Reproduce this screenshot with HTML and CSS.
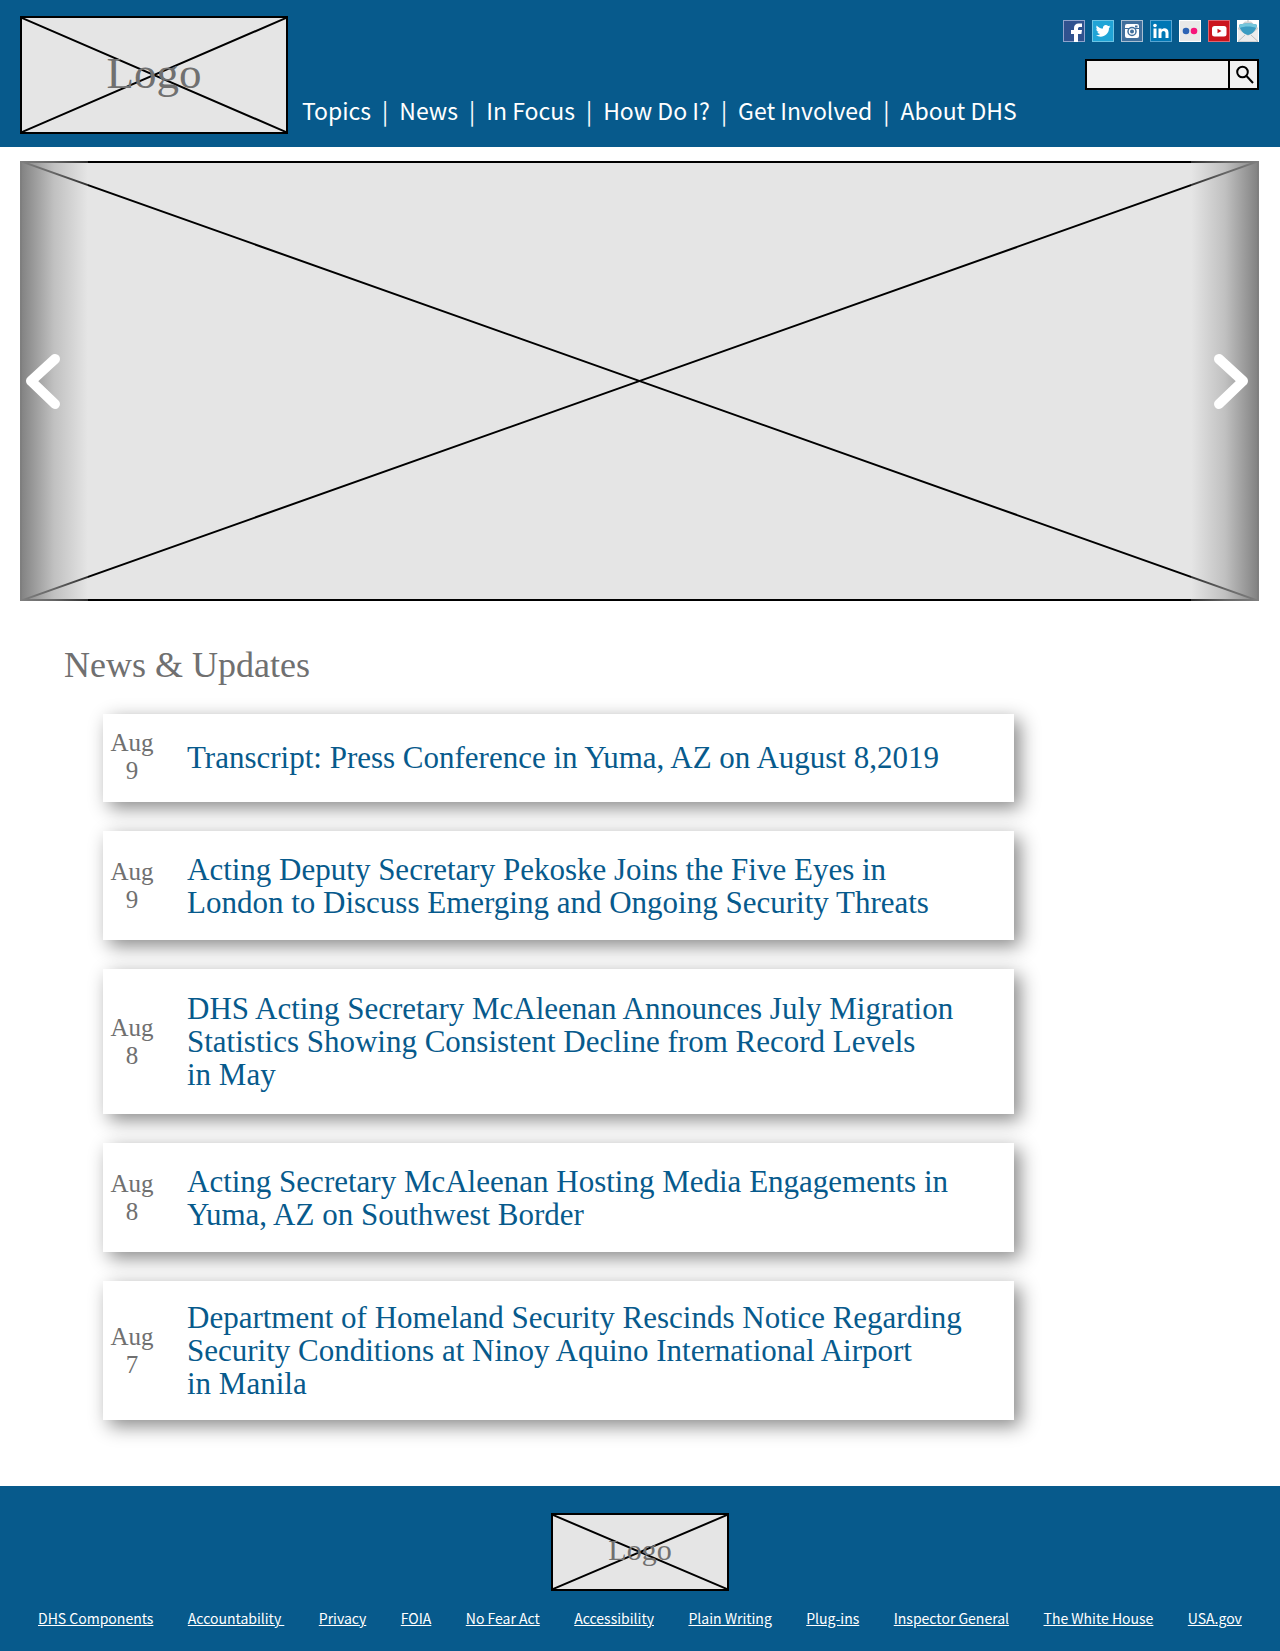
FILE: index.html
```html
<!DOCTYPE html>
<html lang="en">
<head>
<meta charset="utf-8">
<meta name="viewport" content="width=device-width, initial-scale=1">
<title>Homeland Security</title>
<link rel="stylesheet" href="styles.css">
</head>
<body>
<header class="site-header">
  <a class="logo logo--large" href="#" aria-label="Home">
    <svg class="cross" viewBox="0 0 100 100" preserveAspectRatio="none" aria-hidden="true"><path d="M0 0L100 100M100 0L0 100"/></svg>
    <span class="logo-text">Logo</span>
  </a>
  <nav class="main-nav" aria-label="Main">
    <a href="#">Topics</a><span class="bar">|</span>
    <a href="#">News</a><span class="bar">|</span>
    <a href="#">In Focus</a><span class="bar">|</span>
    <a href="#">How Do I?</a><span class="bar">|</span>
    <a href="#">Get Involved</a><span class="bar">|</span>
    <a href="#">About DHS</a>
  </nav>
  <div class="tools">
    <div class="social">
      <a href="#" aria-label="Facebook"><svg viewBox="0 0 22 22"><rect width="22" height="22" fill="#8fa3cc"/><rect x="1" y="1" width="20" height="20" fill="#30528f"/><path fill="#fff" d="M11 22v-8H8v-4h3V8c0-3 2-4.500 4.500-4.500H19V7h-2c-1.300 0-2 .5-2 1.500V10h4l-.6 4H15v8z"/></svg></a>
      <a href="#" aria-label="Twitter"><svg viewBox="0 0 22 22"><rect width="22" height="22" fill="#6cc4e4"/><rect x="1" y="1" width="20" height="20" fill="#20a4d6"/><path fill="#fff" d="M18.500 6.500c-.6.300-1.100.4-1.700.5.700-.4 1-.9 1.300-1.600-.6.300-1.200.6-2 .7-2.100-2.200-5.600-.6-5.100 2.500C8.500 8.500 6.300 7.300 4.700 5.400c-.8 1.500-.4 3.100.9 4-.5 0-.9-.1-1.300-.3 0 1.400 1 2.600 2.400 3-.4.100-.9.100-1.300 0 .4 1.200 1.500 2 2.800 2-1.200 1-2.800 1.400-4.300 1.200 5.700 3.400 13.100.1 13.100-7.300.6-.4 1.100-.9 1.500-1.500z"/></svg></a>
      <a href="#" aria-label="Instagram"><svg viewBox="0 0 22 22"><rect width="22" height="22" fill="#aabfd2"/><rect x="1" y="1" width="20" height="20" fill="#416f9c"/><rect x="4" y="4" width="14" height="14" rx="2" fill="#fff"/><path stroke="#416f9c" d="M4 8.500h4M14 8.500h4"/><circle cx="11" cy="11.500" r="4" fill="#fff" stroke="#416f9c" stroke-width="1.500"/><circle cx="11" cy="11.500" r="2" fill="#416f9c"/><rect x="14" y="5.500" width="2.500" height="2" fill="#416f9c"/></svg></a>
      <a href="#" aria-label="LinkedIn"><svg viewBox="0 0 22 22"><rect width="22" height="22" fill="#58a5d2"/><rect x="1" y="1" width="20" height="20" fill="#0077b5"/><path fill="#fff" d="M3.500 8.500h3V18h-3zM8.500 8.500h3v1.300c1.800-2.500 7-2 7 2.700V18h-3v-4.800c0-3-4-3-4 0V18h-3z"/><circle cx="5" cy="5.500" r="1.800" fill="#fff"/></svg></a>
      <a href="#" aria-label="Flickr"><svg viewBox="0 0 22 22"><rect width="22" height="22" fill="#fff"/><rect x="1" y="1" width="20" height="20" fill="#e9e9e9"/><circle cx="7" cy="11" r="3.300" fill="#2d63b4"/><circle cx="15" cy="11" r="3.300" fill="#f6157a"/></svg></a>
      <a href="#" aria-label="YouTube"><svg viewBox="0 0 22 22"><rect width="22" height="22" fill="#dc6570"/><rect x="1" y="1" width="20" height="20" fill="#cb141c"/><rect x="4" y="6" width="14.500" height="10.500" rx="2.500" fill="#fff"/><path fill="#cb141c" d="M9.500 8.700v4.600l4-2.300z"/></svg></a>
      <a href="#" aria-label="Email updates"><svg viewBox="0 0 22 22"><rect width="22" height="22" fill="#fff"/><path fill="#d2d2d2" d="M1 8L8 1.500h6L21 8v14H1z"/><path fill="#ececec" d="M1 9l10 7 10-7v12H1z"/><path fill="#3b9cc2" d="M2 5c3-2 15-2 18 0-1 5-4 9-9 10C6 14 3 10 2 5z"/><path fill="#74c6dc" d="M2 5c3-2 15-2 18 0l-1 3c-4-2-12-2-16 0z"/><path fill="none" stroke="#bdbdbd" d="M1 21.500L8 15M21 21.500L14 15M11 0v2"/></svg></a>
    </div>
    <form class="search" role="search">
      <input class="search-box" type="search" aria-label="Search">
      <button class="search-button" type="button" aria-label="Search">
        <svg viewBox="0 0 20 20"><circle cx="7.500" cy="7" r="5.300"/><path d="M11.500 11L18 18"/></svg>
      </button>
    </form>
  </div>
</header>

<main>
  <section class="carousel" aria-label="Featured">
    <svg class="cross" viewBox="0 0 100 100" preserveAspectRatio="none" aria-hidden="true"><path d="M0 0L100 100M100 0L0 100"/></svg>
    <button class="slide slide--previous" type="button" aria-label="Previous"><svg viewBox="0 0 34 55"><path d="M29 5L5 27L29 50"/></svg></button>
    <button class="slide slide--next" type="button" aria-label="Next"><svg viewBox="0 0 34 55"><path d="M5 5L29 27L5 50"/></svg></button>
  </section>

  <section class="news">
    <h1 class="news-heading">News &amp; Updates</h1>
    <div class="news-list">
      <article class="card card--short">
        <time class="date" datetime="2019-08-09">Aug<br>9</time>
        <a class="title" href="#">Transcript: Press Conference in Yuma, AZ on August 8,2019</a>
      </article>
      <article class="card">
        <time class="date" datetime="2019-08-09">Aug<br>9</time>
        <a class="title" href="#">Acting Deputy Secretary Pekoske Joins the Five Eyes in<br>London to Discuss Emerging and Ongoing Security Threats</a>
      </article>
      <article class="card card--tall">
        <time class="date" datetime="2019-08-08">Aug<br>8</time>
        <a class="title" href="#">DHS Acting Secretary McAleenan Announces July Migration<br>Statistics Showing Consistent Decline from Record Levels<br>in May</a>
      </article>
      <article class="card">
        <time class="date" datetime="2019-08-08">Aug<br>8</time>
        <a class="title" href="#">Acting Secretary McAleenan Hosting Media Engagements in<br>Yuma, AZ on Southwest Border</a>
      </article>
      <article class="card">
        <time class="date" datetime="2019-08-07">Aug<br>7</time>
        <a class="title" href="#">Department of Homeland Security Rescinds Notice Regarding<br>Security Conditions at Ninoy Aquino International Airport<br>in Manila</a>
      </article>
    </div>
  </section>
</main>

<footer class="site-footer">
  <a class="logo logo--small" href="#" aria-label="Home">
    <svg class="cross" viewBox="0 0 100 100" preserveAspectRatio="none" aria-hidden="true"><path d="M0 0L100 100M100 0L0 100"/></svg>
    <span class="logo-text">Logo</span>
  </a>
  <nav class="footer-nav" aria-label="Footer">
    <a href="#">DHS Components</a>
    <a href="#">Accountability&nbsp;</a>
    <a href="#">Privacy</a>
    <a href="#">FOIA</a>
    <a href="#">No Fear Act</a>
    <a href="#">Accessibility</a>
    <a href="#">Plain Writing</a>
    <a href="#">Plug-ins</a>
    <a href="#">Inspector General</a>
    <a href="#">The White House</a>
    <a href="#">USA.gov</a>
  </nav>
</footer>
</body>
</html>
```

FILE: styles.css
```css
:root {
  --blue: #075a8c;
  --panel: #e5e5e5;
  --gray: #707070;
  --serif: "Liberation Serif", serif;
  --sans: "Noto Sans CJK SC", sans-serif;
}

* { box-sizing: border-box; }

body {
  margin: 0;
  background: #fff;
  color: var(--gray);
  font-family: var(--serif);
}

a { color: inherit; text-decoration: none; }
svg { display: block; }
button { padding: 0; border: 0; cursor: pointer; }

/* Crossed placeholder boxes */
.cross {
  position: absolute;
  inset: 0;
  width: 100%;
  height: 100%;
}
.cross path {
  stroke: #000;
  stroke-width: 2px;
  vector-effect: non-scaling-stroke;
}
.logo {
  position: relative;
  display: grid;
  place-items: center;
  padding-bottom: 4px;
  border: 2px solid #000;
  background: var(--panel);
}
.logo-text { position: relative; }
.logo--large { width: 268px; height: 118px; font-size: 45px; line-height: 48px; }
.logo--small { width: 178px; height: 78px; font-size: 30px; line-height: 32px; }

/* Header */
.site-header {
  display: flex;
  gap: 14px;
  padding: 16px 21px 13px 20px;
  background: var(--blue);
}
.main-nav {
  display: flex;
  align-self: flex-end;
  gap: 11px;
  padding-bottom: 6px;
  color: #fff;
  font: 23px/36px var(--sans);
  white-space: nowrap;
}
.tools {
  display: flex;
  flex-direction: column;
  align-items: flex-end;
  gap: 17px;
  margin-left: auto;
  padding-top: 4px;
}
.social { display: flex; gap: 7px; }
.social svg { width: 22px; height: 22px; }
.search {
  display: flex;
  width: 174px;
  height: 31px;
  border: 2px solid #000;
}
.search-box {
  flex: 1;
  min-width: 0;
  padding: 0 6px;
  border: 0;
  border-radius: 0;
  background: #f2f2f2;
  font: 16px var(--sans);
}
.search-button {
  display: grid;
  place-items: center;
  width: 29px;
  padding-left: 2px;
  border-left: 2px solid #000;
  background: #f2f2f2;
}
.search-button svg { width: 20px; height: 20px; }
.search-button circle,
.search-button path { fill: none; stroke: #000; stroke-width: 2px; }

/* Carousel */
.carousel {
  position: relative;
  display: flex;
  justify-content: space-between;
  aspect-ratio: 1239 / 440;
  margin: 14px 21px 0 20px;
  background: var(--panel);
}
.carousel::before {
  content: "";
  position: absolute;
  inset: 0;
  border: 2px solid #000;
}
.slide {
  position: relative;
  display: flex;
  align-items: center;
  width: 68px;
  --fade: #808080, rgb(168 168 168 / 60%) 50%, rgb(230 230 230 / 20%);
}
.slide svg { width: 34px; height: 55px; }
.slide path {
  fill: none;
  stroke: #fff;
  stroke-width: 10px;
  stroke-linecap: round;
  stroke-linejoin: round;
}
.slide--previous {
  padding-left: 6px;
  background: linear-gradient(to right, var(--fade));
}
.slide--next {
  justify-content: flex-end;
  padding-right: 11px;
  background: linear-gradient(to left, var(--fade));
}

/* News */
.news { padding: 44px 64px 66px; }
.news-heading {
  margin: 0;
  font-size: 36px;
  font-weight: 400;
  line-height: 40px;
}
.news-list {
  display: grid;
  gap: 29px;
  max-width: 950px;
  margin-top: 29px;
  padding-left: 39px;
}
.card {
  display: flex;
  align-items: center;
  gap: 26px;
  min-height: 109px;
  padding: 20px 20px 20px 0;
  background: #fff;
  box-shadow: 6px 6px 18px rgb(0 0 0 / 47%);
}
.card--short { min-height: 88px; padding-block: 15px 17px; }
.card--tall { min-height: 145px; }
.date {
  flex: none;
  width: 58px;
  font-size: 25px;
  line-height: 28px;
  text-align: center;
}
.title {
  color: var(--blue);
  font-size: 31px;
  line-height: 33px;
}

/* Footer */
.site-footer {
  display: flex;
  flex-direction: column;
  align-items: center;
  gap: 15px;
  padding: 27px 38px 21px;
  background: var(--blue);
}
.footer-nav {
  display: flex;
  justify-content: space-between;
  width: 100%;
  color: #fff;
  font: 14px/24px var(--sans);
  white-space: nowrap;
}
.footer-nav a { text-decoration: underline; }
```
